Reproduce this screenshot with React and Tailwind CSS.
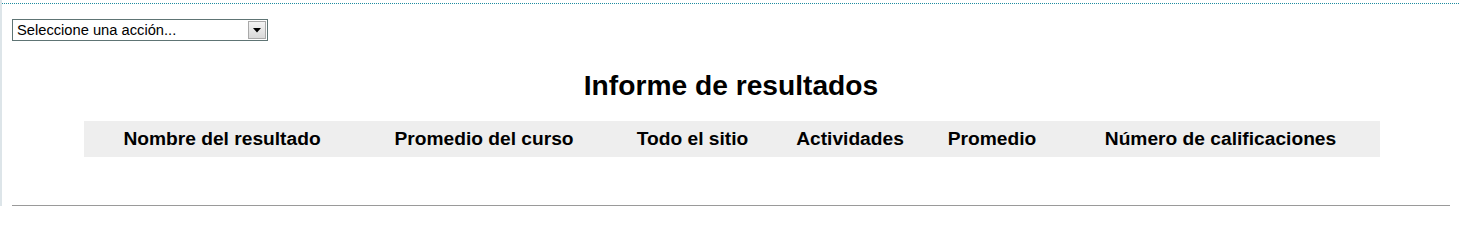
export default function App() {
  const cols = [
    { w: "w-[276px]", t: "Nombre del resultado" },
    { w: "w-[248px]", t: "Promedio del curso" },
    { w: "w-[169px]", t: "Todo el sitio" },
    { w: "w-[146px]", t: "Actividades" },
    { w: "w-[138px]", t: "Promedio" },
    { w: "w-[319px]", t: "Número de calificaciones" },
  ];
  return (
    <div
      className="h-[206px] w-[1459px] overflow-hidden bg-white border-l-2 border-[#dde5e9] text-black"
      style={{ fontFamily: '"Liberation Sans", Arial, sans-serif' }}
    >
      <div className="pt-[3px]">
        <div className="border-t border-dotted border-[#1f8ca0]" />
      </div>
      <div className="pl-[10px] pr-[9px]">
        <div className="mt-[15px] flex h-[22px] w-[256px] items-center justify-between border border-[#5e7474] bg-white">
          <span className="pl-[4px] text-[14.7px] leading-none">Seleccione una acción...</span>
          <div className="mr-[1px] flex h-[18px] w-[18px] items-center justify-center border border-[#a9a9a9] bg-gradient-to-b from-[#f4f4f4] to-[#d9d9d9]">
            <svg width="8" height="5" viewBox="0 0 8 5">
              <polygon points="0,0 8,0 4,4.5" fill="#000" />
            </svg>
          </div>
        </div>
        <h2 className="mt-[29px] h-[30px] text-center text-[28.2px] font-bold leading-[30px]">
          Informe de resultados
        </h2>
        <div className="mt-[21px] ml-[72px] flex h-[36px] w-[1296px] items-center bg-[#eeeeee]">
          {cols.map((c) => (
            <div key={c.t} className={`${c.w} text-center text-[19.2px] font-bold leading-none`}>
              {c.t}
            </div>
          ))}
        </div>
        <div className="mt-[48px] border-t border-[#9a9a9a]" />
      </div>
    </div>
  );
}
